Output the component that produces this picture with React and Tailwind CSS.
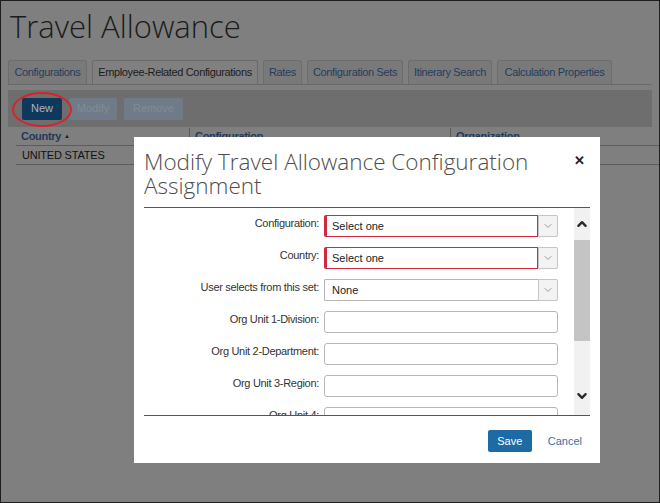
import React from "react";

const arial = { fontFamily: '"Liberation Sans", Arial, sans-serif' };
const open = { fontFamily: '"Open Sans", "Noto Sans", sans-serif' };

function Chevron({ dir = "down", className = "", stroke = "#999", sw = 1.2, size = 10 }) {
  const d = dir === "down" ? "M2 3.5 L5 6.5 L8 3.5" : "M2 6.5 L5 3.5 L8 6.5";
  return (
    <svg width={size} height={size} viewBox="0 0 10 10" className={className}>
      <path d={d} fill="none" stroke={stroke} strokeWidth={sw} strokeLinecap="round" strokeLinejoin="round" />
    </svg>
  );
}

function SelectBox({ text, required }) {
  return (
    <div className="flex h-[22px] w-[234px]">
      <div
        className={
          "flex flex-1 items-center rounded-l-[2px] bg-white text-[11px] text-[#222] " +
          (required
            ? "border border-l-[3px] border-[#d3283d] pl-[5px]"
            : "border border-r-0 border-[#b5b5b5] pl-[7px]")
        }
      >
        {text}
      </div>
      <div className="flex w-[20px] items-center justify-center rounded-r-[2px] border border-[#c4c4c4] bg-[#f3f3f3]">
        <Chevron dir="down" stroke="#9a9a9a" sw={1} />
      </div>
    </div>
  );
}

function TextBox() {
  return <div className="h-[22px] w-[234px] rounded-[3px] border border-[#b8b8b8] bg-white" />;
}

function Row({ label, children }) {
  return (
    <div className="flex h-[22px] items-center">
      <div className="w-[175px] pb-[5px] text-right text-[11px] tracking-[-0.3px] text-[#333]">{label}</div>
      <div className="ml-[5px]">{children}</div>
    </div>
  );
}

const tabs = [
  { t: "Configurations", w: 79 },
  { t: "Employee-Related Configurations", w: 166, active: true },
  { t: "Rates", w: 39 },
  { t: "Configuration Sets", w: 96 },
  { t: "Itinerary Search", w: 84 },
  { t: "Calculation Properties", w: 115 },
];

export default function App() {
  return (
    <div className="relative h-[503px] w-[660px] overflow-hidden border border-[#1e1e1e] bg-[#7f7f7f]" style={arial}>
      {/* Page */}
      <div className="pl-[9px] pt-[5px] text-[31px] font-light leading-[40px] text-[#1b1b1b]" style={open}>
        Travel Allowance
      </div>
      <div className="mt-[14px] flex gap-[5px] pl-[7px]">
        {tabs.map((tb) => (
          <div
            key={tb.t}
            style={{ width: tb.w }}
            className={
              "flex h-[24px] items-center justify-center rounded-t-[3px] border border-b-0 text-[11px] tracking-[-0.35px] " +
              (tb.active
                ? "border-[#6a6a6a] bg-[#808080] text-[#1c1c1c]"
                : "border-[#6d6d6d] bg-[#797979] text-[#263d5c]")
            }
          >
            {tb.t}
          </div>
        ))}
      </div>
      <div className="mx-[7px] h-[1px] bg-[#6a6a6a]" />
      <div className="mx-[7px] mt-[5px] flex h-[37px] items-center gap-[7px] bg-[#6e6e6e] pl-[14px]">
        <div className="flex h-[22px] w-[40px] items-center justify-center rounded-[2px] bg-[#0e395c] text-[11px] text-[#aab5c2]">
          New
        </div>
        <div className="flex h-[22px] w-[48px] items-center justify-center rounded-[2px] bg-[#6f7c88] text-[11px] text-[#7f8b97]">
          Modify
        </div>
        <div className="flex h-[22px] w-[59px] items-center justify-center rounded-[2px] bg-[#6f7c88] text-[11px] text-[#7f8b97]">
          Remove
        </div>
      </div>
      {/* table */}
      <div className="ml-[15px] mt-[1px]">
        <div className="flex h-[18px] items-center border-b border-[#5c5c5c] text-[11px] font-bold tracking-[-0.3px] text-[#223a5a]">
          <div className="flex w-[173px] items-center pl-[5px]">
            Country <span className="ml-[3px] text-[6px] text-[#1e1e1e]">▲</span>
          </div>
          <div className="h-full w-[1px] bg-[#5c5c5c]" />
          <div className="w-[260px] pl-[5px]">Configuration</div>
          <div className="h-full w-[1px] bg-[#5c5c5c]" />
          <div className="pl-[5px]">Organization</div>
        </div>
        <div className="flex h-[19px] items-center border-b border-[#5c5c5c] pl-[6px] text-[11px] tracking-[-0.2px] text-[#111]">
          UNITED STATES
        </div>
      </div>

      {/* red annotation */}
      <div className="absolute left-[11px] top-[91px] h-[35px] w-[60px] rounded-[50%] border-2 border-[#d5232f]" />

      {/* Modal */}
      <div className="absolute left-[133px] top-[136px] flex h-[326px] w-[466px] flex-col bg-white px-[10px]">
        <div className="relative pt-[13px] text-[22.5px] font-light leading-[24px] text-[#4d4d4d]" style={open}>
          <div className="w-[420px]">Modify Travel Allowance Configuration Assignment</div>
          <div className="absolute right-[5px] top-[12px] text-[13px] font-bold text-[#222]" style={arial}>
            ✕
          </div>
        </div>
        <div className="mt-[9px] h-[1px] bg-[#555]" />
        <div className="flex h-[207px] overflow-hidden">
          <div className="flex flex-1 flex-col gap-[10px] pt-[7px]">
            <Row label="Configuration:">
              <SelectBox text="Select one" required />
            </Row>
            <Row label="Country:">
              <SelectBox text="Select one" required />
            </Row>
            <Row label="User selects from this set:">
              <SelectBox text="None" />
            </Row>
            <Row label="Org Unit 1-Division:">
              <TextBox />
            </Row>
            <Row label="Org Unit 2-Department:">
              <TextBox />
            </Row>
            <Row label="Org Unit 3-Region:">
              <TextBox />
            </Row>
            <Row label="Org Unit 4:">
              <TextBox />
            </Row>
          </div>
          <div className="flex w-[16px] flex-col items-center bg-[#f1f1f1]">
            <div className="flex h-[32px] items-center justify-center">
              <Chevron dir="up" stroke="#2a2a2a" sw={2} size={12} />
            </div>
            <div className="h-[101px] w-full bg-[#c4c4c4]" />
            <div className="flex h-[74px] items-end justify-center pb-[13px]">
              <Chevron dir="down" stroke="#2a2a2a" sw={2} size={12} />
            </div>
          </div>
        </div>
        <div className="h-[1px] bg-[#555]" />
        <div className="flex items-center justify-end gap-[16px] pr-[8px] pt-[14px]">
          <div className="flex h-[22px] w-[44px] items-center justify-center rounded-[2px] bg-[#1d6aa5] text-[11px] text-white">
            Save
          </div>
          <div className="text-[11px] text-[#3a6ea7]">Cancel</div>
        </div>
      </div>
    </div>
  );
}
